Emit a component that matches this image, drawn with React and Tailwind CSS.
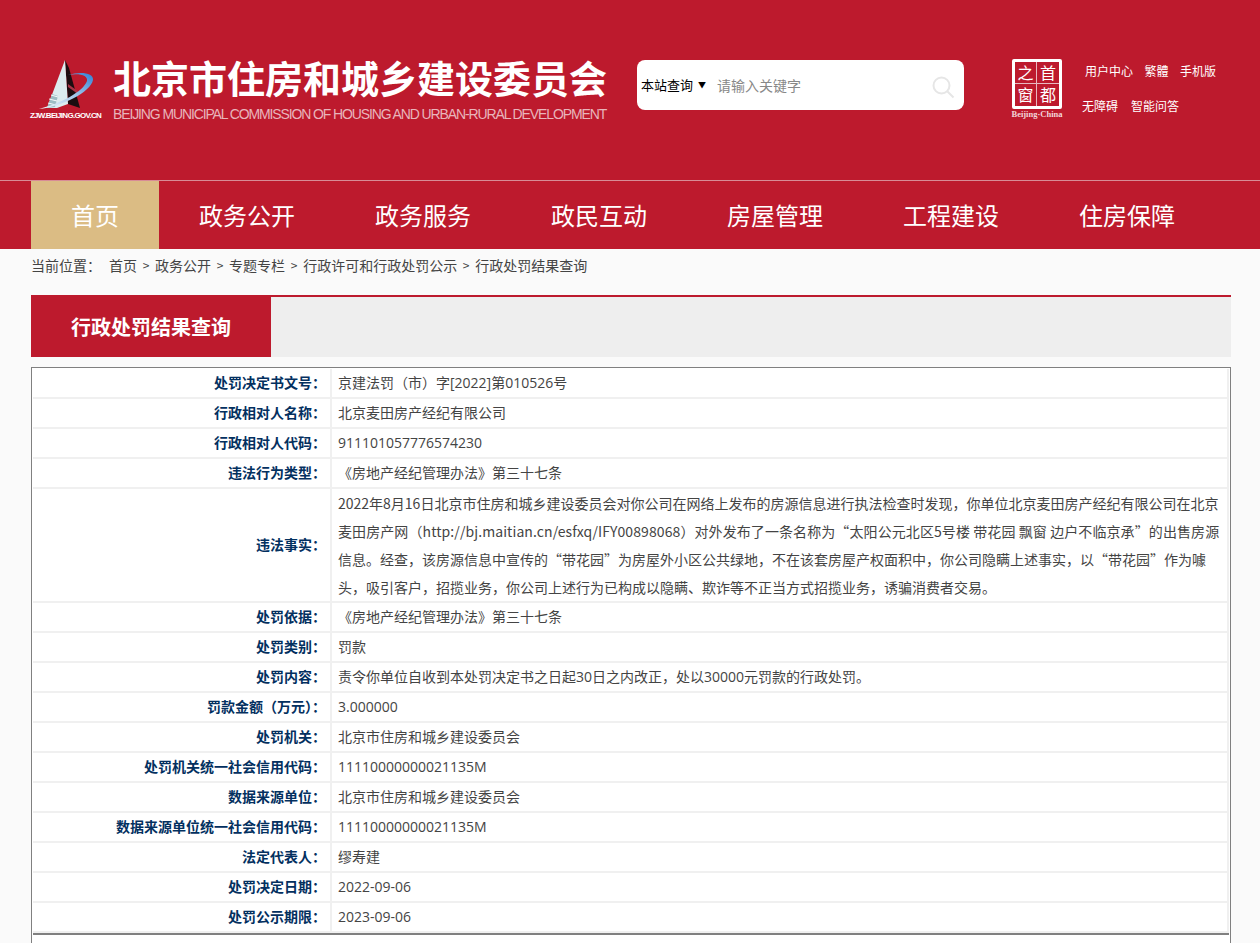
import React from 'react';

const FONT = '[font-family:"Noto_Sans_CJK_SC","Liberation_Sans",sans-serif]';

const navItems = ['政务公开', '政务服务', '政民互动', '房屋管理', '工程建设', '住房保障'];

const crumbs = ['首页', '政务公开', '专题专栏', '行政许可和行政处罚公示', '行政处罚结果查询'];

const rows = [
  ['处罚决定书文号：', '京建法罚（市）字[2022]第010526号'],
  ['行政相对人名称：', '北京麦田房产经纪有限公司'],
  ['行政相对人代码：', '911101057776574230'],
  ['违法行为类型：', '《房地产经纪管理办法》第三十七条'],
  [
    '违法事实：',
    [
      '2022年8月16日北京市住房和城乡建设委员会对你公司在网络上发布的房源信息进行执法检查时发现，你单位北京麦田房产经纪有限公司在北京',
      '麦田房产网（http://bj.maitian.cn/esfxq/IFY00898068）对外发布了一条名称为“太阳公元北区5号楼 带花园 飘窗 边户不临京承”的出售房源',
      '信息。经查，该房源信息中宣传的“带花园”为房屋外小区公共绿地，不在该套房屋产权面积中，你公司隐瞒上述事实，以“带花园”作为噱',
      '头，吸引客户，招揽业务，你公司上述行为已构成以隐瞒、欺诈等不正当方式招揽业务，诱骗消费者交易。',
    ],
  ],
  ['处罚依据：', '《房地产经纪管理办法》第三十七条'],
  ['处罚类别：', '罚款'],
  ['处罚内容：', '责令你单位自收到本处罚决定书之日起30日之内改正，处以30000元罚款的行政处罚。'],
  ['罚款金额（万元）：', '3.000000'],
  ['处罚机关：', '北京市住房和城乡建设委员会'],
  ['处罚机关统一社会信用代码：', '11110000000021135M'],
  ['数据来源单位：', '北京市住房和城乡建设委员会'],
  ['数据来源单位统一社会信用代码：', '11110000000021135M'],
  ['法定代表人：', '缪寿建'],
  ['处罚决定日期：', '2022-09-06'],
  ['处罚公示期限：', '2023-09-06'],
];

const Logo = () => (
  <div className="-mt-[2px] flex w-[72px] flex-col items-center">
    <svg width="72" height="52" viewBox="0 0 72 52">
      <defs>
        <linearGradient id="swoosh" x1="0" y1="1" x2="1" y2="0">
          <stop offset="0" stopColor="#f4f8fb" />
          <stop offset="0.55" stopColor="#9cc4e8" />
          <stop offset="1" stopColor="#2f7fd6" />
        </linearGradient>
      </defs>
      <path d="M34 2 L38 10 L49 50 L37 46Z" fill="#1c0d10" />
      <path d="M34 2 L16 50 L26 50 L37 46Z" fill="#dcecef" />
      <path d="M21 36 L16 50 L24 49 L27 38Z" fill="#9dbcc3" />
      <path d="M18 41 L26 43 M17 45 L25 47 M20 37 L27 39" stroke="#f7fbfc" strokeWidth="1" />
      <path d="M37 26 L48 34 L47 36 L37 29Z" fill="#a83446" />
      <path d="M8 51 C30 49 60 34 62 22 C63 15 50 13 37 17 C50 15 57 18 56 23 C52 34 30 45 8 51Z" fill="url(#swoosh)" />
    </svg>
    <span className="mt-[1px] -ml-[3px] whitespace-nowrap text-[8px] font-bold leading-[10px] tracking-[-0.7px] text-white [font-family:'Liberation_Sans',sans-serif]">
      ZJW.BEIJING.GOV.CN
    </span>
  </div>
);

const CapitalBadge = () => (
  <div className="flex w-[52px] flex-col items-center">
    <div className="grid h-[50px] w-[50px] grid-cols-2 grid-rows-2 rounded-[2px] border-[3px] border-white bg-[#bd1a2d] text-center text-[16px] leading-[21px] text-white">
      <span className="border-r border-b border-[#e8b8bf]">之</span>
      <span className="border-b border-[#e8b8bf]">首</span>
      <span className="border-r border-[#e8b8bf]">窗</span>
      <span>都</span>
    </div>
    <span className="mt-[1px] whitespace-nowrap text-[8.5px] font-bold leading-[9px] text-[#f3d6da] [font-family:'Liberation_Serif',serif]">
      Beijing·China
    </span>
  </div>
);

const Row = ({ label, value }) => (
  <div className="flex">
    <div className="flex w-[299px] shrink-0 items-center justify-end border-r-2 border-b-2 border-[#f0f0f0] pr-[4px] pb-[2px] text-[14px] font-bold text-[#03305f]">
      {label}
    </div>
    {Array.isArray(value) ? (
      <div className="flex-1 border-r-2 border-b-2 border-[#f0f0f0] pl-[6px] text-[14px] leading-[28px] text-[#444]">
        {value.map((line, i) => (
          <div key={line} className={i === 1 ? 'whitespace-nowrap tracking-[0.09px]' : 'whitespace-nowrap'}>{line}</div>
        ))}
      </div>
    ) : (
      <div className="flex h-[30px] flex-1 items-center border-r-2 border-b-2 border-[#f0f0f0] pb-[2px] pl-[6px] text-[14px] whitespace-nowrap text-[#444] [font-family:'Open_Sans','Noto_Sans_CJK_SC',sans-serif]">
        {value}
      </div>
    )}
  </div>
);

export default function App() {
  return (
    <div className={`h-[943px] overflow-hidden bg-[#fafafa] ${FONT}`}>
      <header className="flex h-[180px] bg-[#bd1a2d] pt-[60px] pl-[31px]">
        <div className="flex h-[50px] items-start">
          <Logo />
          <div className="ml-[10px] -mt-[6px] flex w-[494px] flex-col">
            <h1 className="whitespace-nowrap text-[38px] font-bold leading-[46px] text-white">北京市住房和城乡建设委员会</h1>
            <p className="mt-[6px] whitespace-nowrap text-[14px] leading-[16px] tracking-[-1.12px] text-[#e8b4bb] [font-family:'Liberation_Sans',sans-serif]">
              BEIJING MUNICIPAL COMMISSION OF HOUSING AND URBAN-RURAL DEVELOPMENT
            </p>
          </div>
        </div>
        <div className="ml-[30px] flex h-[50px] w-[327px] items-center rounded-[8px] bg-white pl-[4px] pr-[8px] text-[13px]">
          <span className="text-black">本站查询</span>
          <span className="ml-[5px] -mt-[1px] text-[8px] text-black">▼</span>
          <span className="ml-[11px] text-[14px] text-[#888]">请输入关键字</span>
          <svg className="ml-auto mt-[5px]" width="24" height="24" viewBox="0 0 24 24" fill="none" stroke="#e6e6e6" strokeWidth="2">
            <circle cx="9.5" cy="9.5" r="8" />
            <path d="M15.5 15.5l6 6" />
          </svg>
        </div>
        <div className="ml-[47px] -mt-[1px]">
          <CapitalBadge />
        </div>
        <div className="ml-[19px] mt-[2px] flex flex-col gap-[15px] text-[12px] leading-[20px] text-white">
          <div className="-mt-[1px] ml-[3px] flex gap-[11.5px]">
            <span>用户中心</span>
            <span>繁體</span>
            <span>手机版</span>
          </div>
          <div className="flex gap-[13px]">
            <span>无障碍</span>
            <span>智能问答</span>
          </div>
        </div>
      </header>

      <nav className="flex h-[69px] border-t border-[#d88c96] bg-[#bd1a2d] pl-[31px] text-[24px] text-white">
        <a className="flex w-[128px] items-center justify-center bg-[#dbbc84]">首页</a>
        {navItems.map((item) => (
          <a key={item} className="flex w-[176px] items-center justify-center">{item}</a>
        ))}
      </nav>

      <main className="pr-[29px] pl-[31px]">
        <div className="flex h-[32px] items-center whitespace-nowrap text-[14px] text-[#444]">
          <span className="mr-[8px]">当前位置：</span>
          {crumbs.map((crumb, i) => (
            <span key={crumb} className="flex items-center">
              {i > 0 && <span className="mx-[5.7px] text-[12px]">&gt;</span>}
              {crumb}
            </span>
          ))}
        </div>

        <div className="mt-[14px] flex h-[62px] border-t-2 border-[#bd1a2d] bg-[#eeeeee]">
          <h2 className="flex w-[240px] items-center justify-center bg-[#bd1a2d] text-[20px] font-bold text-white">行政处罚结果查询</h2>
        </div>

        <div className="mt-[10px] h-[600px] border-x border-t border-[#808080] bg-white px-[1px] pt-[1px]">
          <div className="border-b-2 border-[#808080]">
            {rows.map(([label, value]) => (
              <Row key={label} label={label} value={value} />
            ))}
          </div>
        </div>
      </main>
    </div>
  );
}
